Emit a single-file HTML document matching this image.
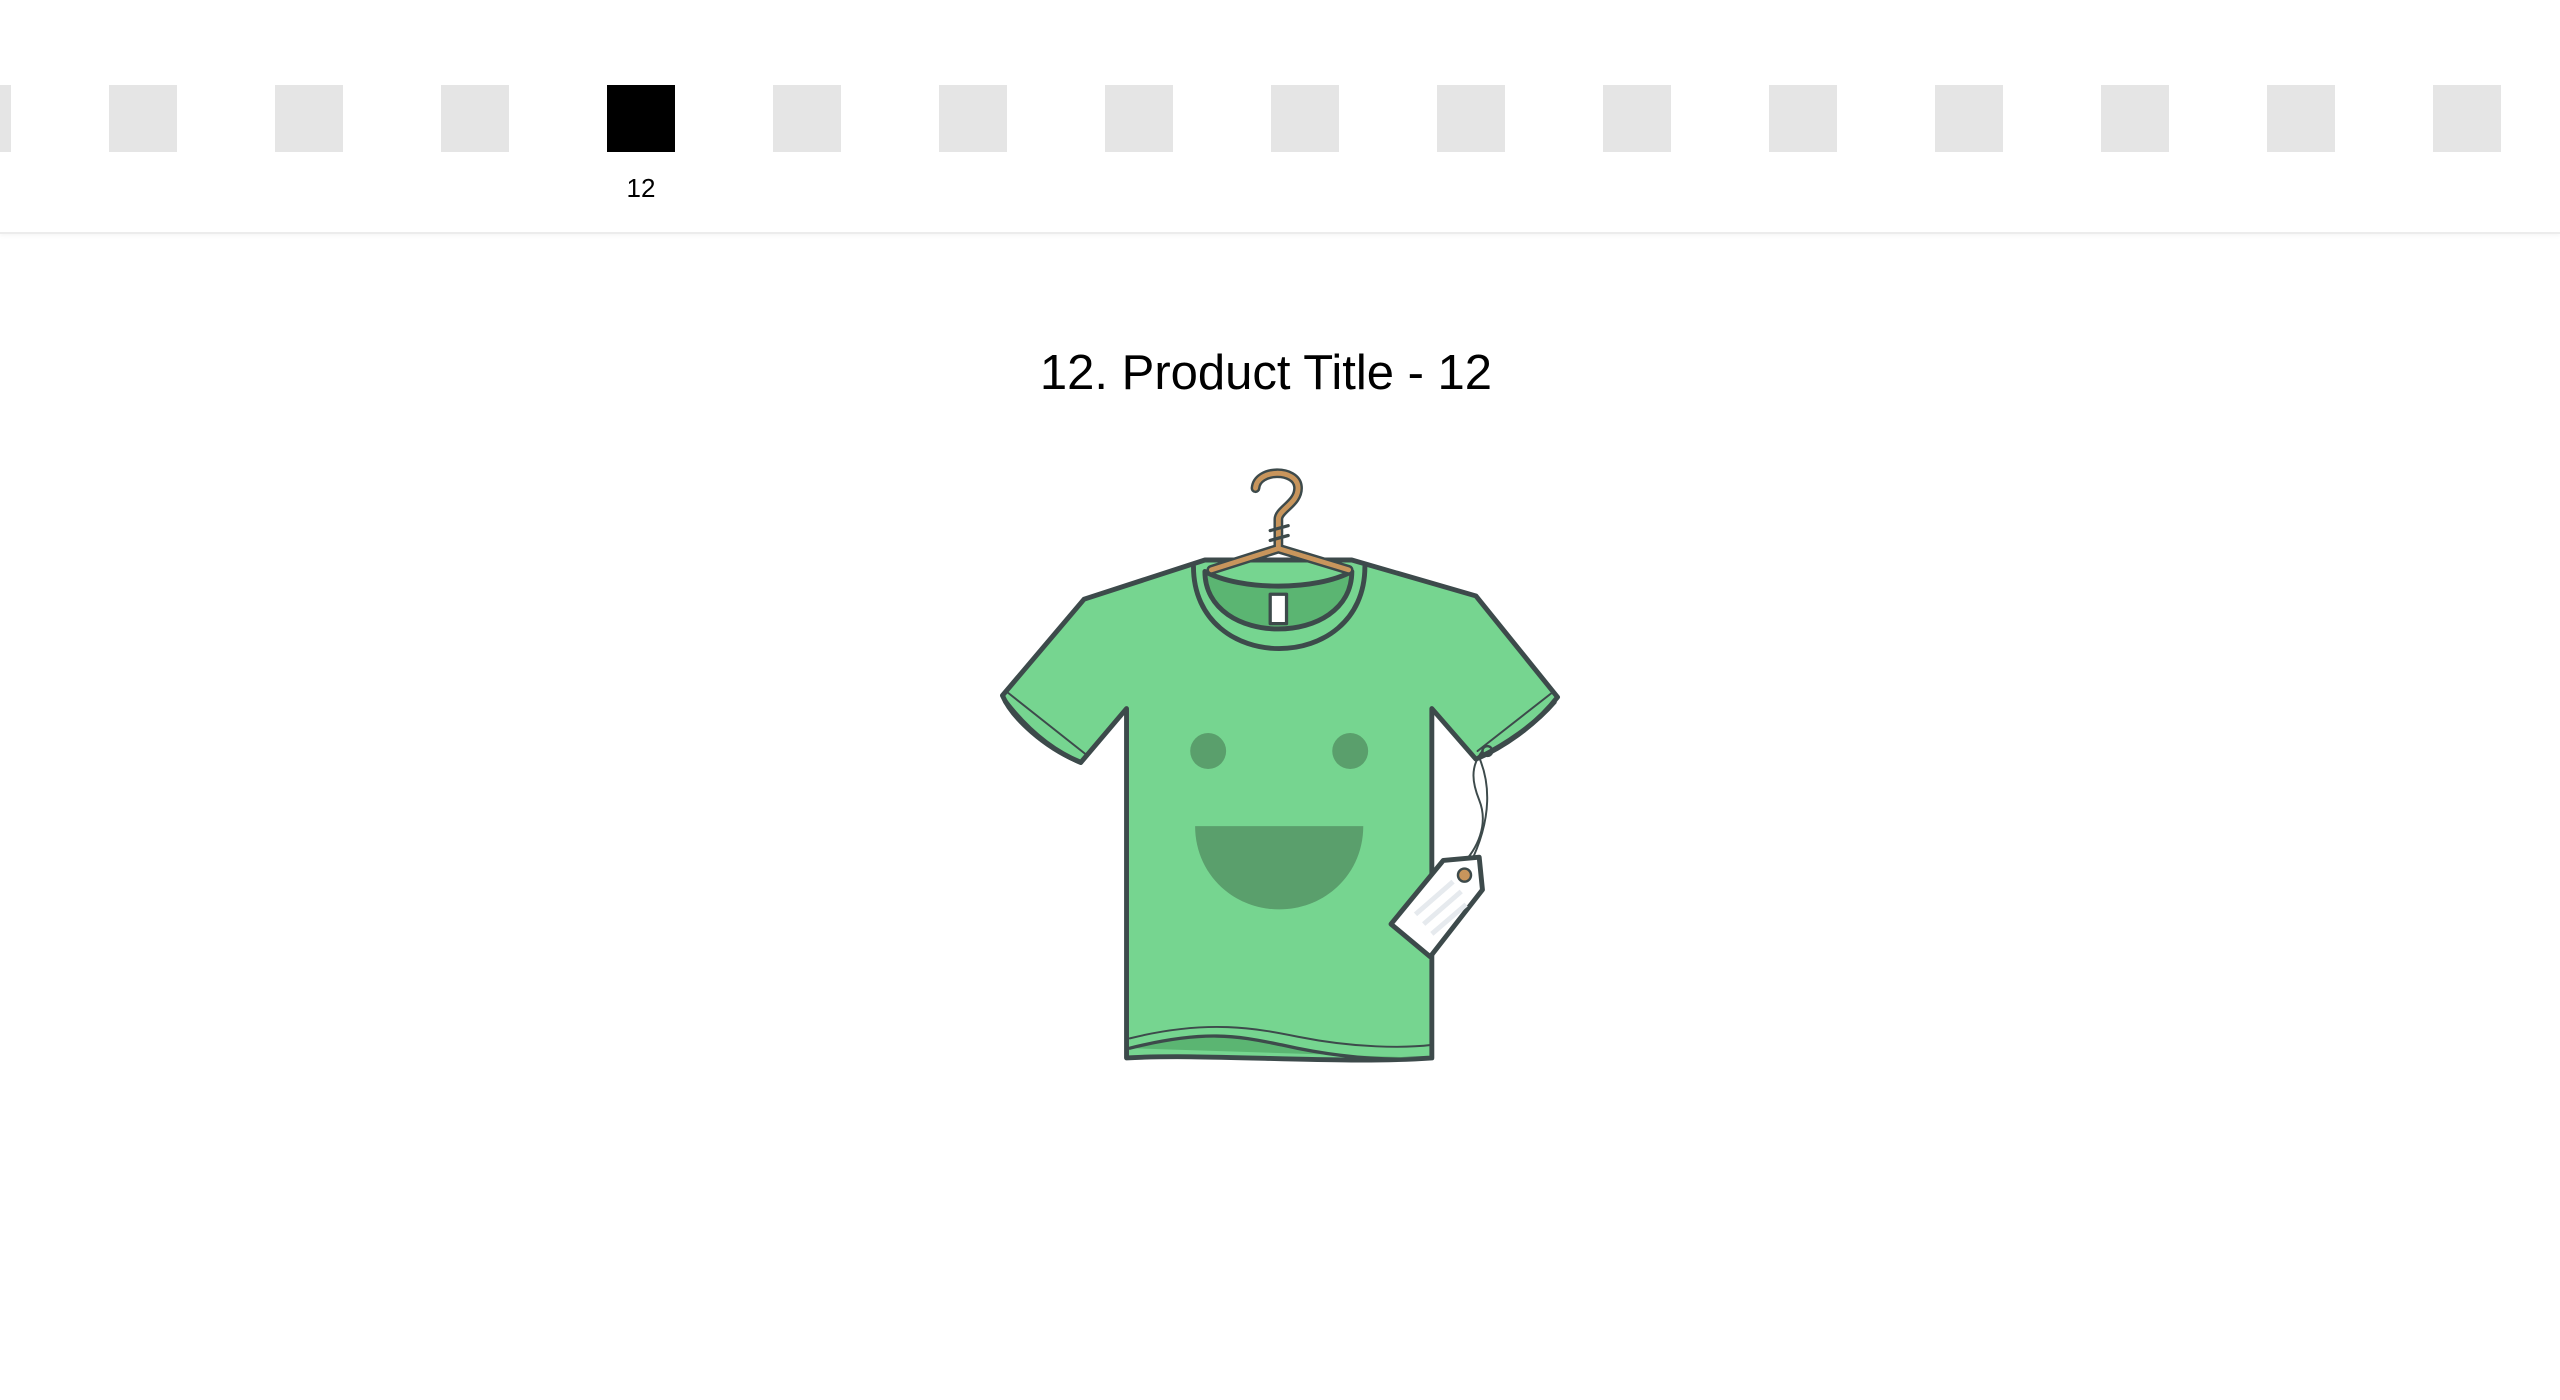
<!DOCTYPE html>
<html><head><meta charset="utf-8"><style>
html,body{margin:0;padding:0;background:#fff;width:2560px;height:1400px;overflow:hidden;font-family:"Liberation Sans",sans-serif}
.hdr{position:absolute;left:0;top:0;width:2560px;height:232px;border-bottom:2px solid #ececec;box-shadow:0 2px 4px rgba(0,0,0,0.04)}
.sq{position:absolute;top:85px;width:68px;height:67px;background:#e5e5e5}
.lbl{position:absolute;top:173px;left:607px;width:68px;text-align:center;font-size:26px;color:#000}
.title{position:absolute;top:345px;left:0;width:2532px;text-align:center;font-size:49px;color:#000}
svg{position:absolute;left:0;top:0}
</style></head><body>
<div class="hdr">
<div class="sq" style="left:-57px"></div>
<div class="sq" style="left:109px"></div>
<div class="sq" style="left:275px"></div>
<div class="sq" style="left:441px"></div>
<div class="sq" style="left:607px;background:#000"></div>
<div class="sq" style="left:773px"></div>
<div class="sq" style="left:939px"></div>
<div class="sq" style="left:1105px"></div>
<div class="sq" style="left:1271px"></div>
<div class="sq" style="left:1437px"></div>
<div class="sq" style="left:1603px"></div>
<div class="sq" style="left:1769px"></div>
<div class="sq" style="left:1935px"></div>
<div class="sq" style="left:2101px"></div>
<div class="sq" style="left:2267px"></div>
<div class="sq" style="left:2433px"></div>
<div class="lbl">12</div>
</div>
<div class="title">12. Product Title - 12</div>
<svg width="2560" height="1400" viewBox="0 0 1568 857.5">
<g stroke="#3d4a4b" stroke-width="3" stroke-linejoin="round" stroke-linecap="round">
<path d="M614 426 L664 367 L738 343 L828 343 L904 365 L954 427 C940 445 920 458 904 465 L877 434 L877 648 C820 652 740 645 690 648 L690 434 L662 467 C640 458 620 440 614 426 Z" fill="#76d590"/>
<path d="M731 347 C731 414 836 414 836 347" fill="#76d590"/>
<path d="M738 350 C760 362 806 362 828 350 C828 397 738 397 738 350 Z" fill="#5bb572"/>
<path d="M692 642 C740 630 760 635 785 640 C820 648 850 650 877 648" fill="#5bb572" stroke-width="2"/>
<path d="M692 636 C740 624 770 630 795 635 C830 642 860 642 877 640" fill="none" stroke-width="1.2"/>
<path d="M617 424 L665 462 M951 424 L905 460" fill="none" stroke-width="1.2"/>
<path d="M616 430 C630 448 645 460 662 467 M952 430 C940 444 922 456 906 464" fill="none" stroke-width="3"/>
<rect x="778" y="364" width="10" height="18" fill="#fff" stroke-width="2"/>
<path d="M742 349 L783 336 L826 349 M783 336 L783 318 C783 312 796 308 795 298 C794 287 770 287 769 299" fill="none" stroke="#3d4a4b" stroke-width="6"/>
<path d="M742 349 L783 336 L826 349 M783 336 L783 318 C783 312 796 308 795 298 C794 287 770 287 769 299" fill="none" stroke="#c8955c" stroke-width="3"/>
<path d="M778 325 L789 322 M778 331 L789 328" stroke-width="2"/>
<path d="M908 460 C900 470 902 480 906 490 C912 505 905 520 895 530" fill="none" stroke-width="1.2"/>
<path d="M906 464 C912 478 915 500 900 530" fill="none" stroke-width="1.2"/>
<circle cx="911" cy="460" r="3" fill="none" stroke-width="1.5"/>
<path d="M884 527 L906 525 L908 545 L876 586 L852 566 Z" fill="#fff" stroke-width="3"/>
<circle cx="897" cy="536" r="4" fill="#c8955c" stroke-width="1.5"/>
</g>
<path d="M867 560 L890 540 M872 566 L895 546 M877 572 L898 554" stroke="#e6eaee" stroke-width="3"/>
<circle cx="740" cy="460" r="11" fill="#5a9f6c"/>
<circle cx="827" cy="460" r="11" fill="#5a9f6c"/>
<path d="M732 506 L835 506 C835 535 812 557 783.5 557 C755 557 732 535 732 506 Z" fill="#5a9f6c"/>
</svg>
</body></html>
